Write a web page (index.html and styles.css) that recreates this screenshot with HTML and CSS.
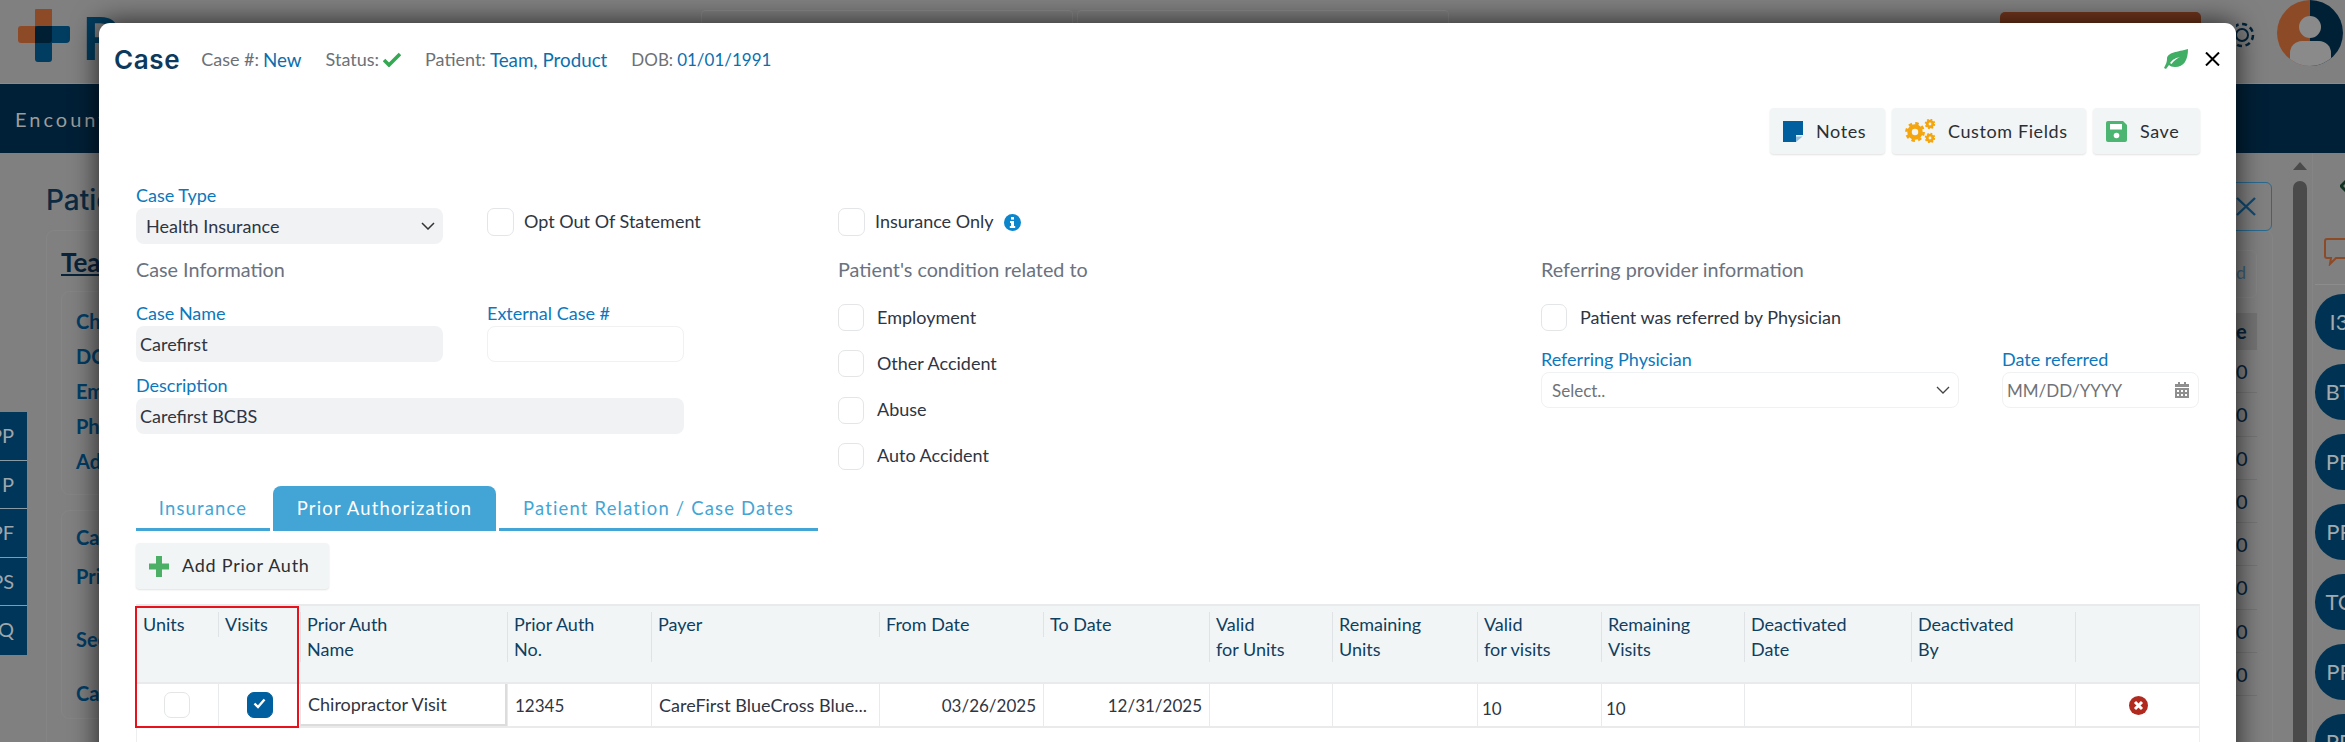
FILE: index.html
```html
<!DOCTYPE html>
<html lang="en">
<head>
<meta charset="utf-8">
<title>Case</title>
<link rel="stylesheet" href="styles.css">
</head>
<body>
<div class="page">
  <header class="topbar">
    <div class="brand">
      <svg class="logo" width="54" height="54" viewBox="0 0 54 54"><path d="M18 2a3 3 0 0 1 3-3h12a2 2 0 0 1 2 2v33H4a3 3 0 0 1-3-3V20a3 3 0 0 1 3-3h14z" fill="#8d4a27"/><path d="M18 17h33a2 2 0 0 1 2 2v11a4 4 0 0 1-4 4H35v16a3 3 0 0 1-3 3H21a3 3 0 0 1-3-3z" fill="#003d60"/><path d="M18 20a3 3 0 0 1 3-3h14v14a3 3 0 0 1-3 3H18z" fill="#001f33"/></svg>
      <span class="brand-name">R</span>
    </div>
    <div class="top-boxes"><span class="top-box"></span><span class="top-box"></span></div>
    <div class="top-end">
      <span class="top-btn"></span>
      <svg class="gear" width="22" height="32" viewBox="0 0 22 32"><circle cx="6" cy="16" r="6" fill="none" stroke="#00233a" stroke-width="2"/><circle cx="6" cy="16" r="11" fill="none" stroke="#00233a" stroke-width="2.5" stroke-dasharray="5 3.6"/></svg>
      <div class="avatar"><span class="avatar-head"></span><span class="avatar-body"></span></div>
    </div>
  </header>
  <nav class="navbar"><span class="nav-item">Encounters</span></nav>
  <div class="workspace">
    <main class="main">
      <h1 class="page-title">Patient</h1>
      <section class="panel">
        <div class="panel-left">
          <h2 class="patient-name">Team, Product</h2>
          <div class="info-card info-one">
            <p>Chart #</p><p>DOB</p><p>Email</p><p>Phone</p><p>Address</p>
          </div>
          <div class="info-card info-two">
            <p>Case</p><p>Primary</p><p class="far">Secondary</p><p class="mid">Case Type</p>
          </div>
        </div>
        <div class="panel-right">
          <button class="close-box" type="button"><svg width="20" height="19" viewBox="0 0 20 19"><path d="M1 1l18 17M19 1L1 18" stroke="#0f4a73" stroke-width="2.4" fill="none"/></svg></button>
          <div class="mini-card"><span class="mini-text">d</span></div>
          <div class="mini-head">e</div>
          <div class="mini-row">0</div><div class="mini-row">0</div><div class="mini-row">0</div><div class="mini-row">0</div><div class="mini-row">0</div><div class="mini-row">0</div><div class="mini-row">0</div><div class="mini-row">0</div>
        </div>
      </section>
    </main>
    <div class="scroll-track"><span class="scroll-arrow"></span><span class="scroll-thumb"></span></div>
    <aside class="rail">
      <svg class="rail-diamond" width="10" height="14" viewBox="0 0 10 14"><path d="M7 1L1 7l6 6" fill="none" stroke="#0f3320" stroke-width="3"/></svg>
      <svg class="rail-chat" width="30" height="28" viewBox="0 0 30 28"><path d="M3 1h27v19H12l-6 6 1-6H3a2 2 0 0 1-2-2V3a2 2 0 0 1 2-2z" fill="none" stroke="#8d4a27" stroke-width="2"/></svg>
      <div class="rail-people">
        <span class="bubble">I3</span><span class="bubble">BT</span><span class="bubble">PP</span><span class="bubble">PF</span><span class="bubble">TC</span><span class="bubble">PF</span><span class="bubble">PP</span>
      </div>
    </aside>
  </div>
  <div class="side-tabs">
    <span class="side-tab">PP</span><span class="side-tab">P</span><span class="side-tab">PF</span><span class="side-tab">PS</span><span class="side-tab">SQ</span>
  </div>

  <div class="modal">
    <div class="modal-head">
      <div class="head-left">
        <h2 class="modal-title">Case</h2>
        <span class="meta">Case #: <b class="meta-v">New</b></span>
        <span class="meta">Status: <svg class="status-check" width="18" height="15" viewBox="0 0 18 15"><path d="M1 8l5 5L17 2" fill="none" stroke="#35a853" stroke-width="3.6"/></svg></span>
        <span class="meta">Patient: <b class="meta-v">Team, Product</b></span>
        <span class="meta dob">DOB: <b class="meta-v">01/01/1991</b></span>
      </div>
      <div class="head-right">
        <svg width="24" height="20" viewBox="0 0 24 20"><path d="M24 0C24 11 20 18 11 18 8 18 6 17 5 16L2 20 0 19C2 15 3 13 3 10 3 3 14 3 24 0z" fill="#41ae66"/><path d="M6 14C9 10 12 9 16 8 12 10 9.500 12 7.500 15z" fill="#fff"/></svg>
        <svg width="15" height="14" viewBox="0 0 15 14"><path d="M1 .5l13 13M14 .5L1 13.500" stroke="#000" stroke-width="2" fill="none"/></svg>
      </div>
    </div>

    <div class="toolbar">
      <button class="tool-btn btn-notes" type="button">
        <svg width="20" height="21" viewBox="0 0 20 21"><path d="M0 0h20v14h-7v7H0z" fill="#00609f"/><path d="M13 15.500h6.500L13 21z" fill="#8fbfdc"/></svg>
        Notes
      </button>
      <button class="tool-btn btn-fields" type="button">
        <svg width="30" height="24" viewBox="0 0 30 24"><circle cx="10" cy="13" r="5.500" fill="none" stroke="#f5a50d" stroke-width="4.500"/><circle cx="10" cy="13" r="8.600" fill="none" stroke="#f5a50d" stroke-width="2.600" stroke-dasharray="3.500 3.250"/><circle cx="25" cy="5" r="2.800" fill="none" stroke="#f5a50d" stroke-width="2.800"/><circle cx="25" cy="5" r="4.500" fill="none" stroke="#f5a50d" stroke-width="1.600" stroke-dasharray="1.800 1.730"/><circle cx="25" cy="19" r="2.800" fill="none" stroke="#f5a50d" stroke-width="2.800"/><circle cx="25" cy="19" r="4.500" fill="none" stroke="#f5a50d" stroke-width="1.600" stroke-dasharray="1.800 1.730"/></svg>
        Custom Fields
      </button>
      <button class="tool-btn btn-save" type="button">
        <svg width="21" height="21" viewBox="0 0 21 21"><path d="M2 0h15l4 4v15a2 2 0 0 1-2 2H2a2 2 0 0 1-2-2V2a2 2 0 0 1 2-2z" fill="#4cb571"/><rect x="4" y="3" width="12" height="5.500" fill="#fff"/><circle cx="10.500" cy="14.500" r="2.800" fill="#fff"/></svg>
        Save
      </button>
    </div>

    <div class="form">
      <div class="col-left">
        <div class="split">
          <div class="field field-narrow">
            <label class="label">Case Type</label>
            <div class="control filled with-chevron">Health Insurance
              <svg class="chevron" width="14" height="8" viewBox="0 0 14 8"><path d="M1 1l6 6 6-6" fill="none" stroke="#333" stroke-width="1.500"/></svg>
            </div>
          </div>
          <div class="check-row opt-out"><span class="box box-wide"></span><span class="check-text">Opt Out Of Statement</span></div>
        </div>
        <h3 class="section-title">Case Information</h3>
        <div class="split split-fields">
          <div class="field field-narrow">
            <label class="label">Case Name</label>
            <div class="control filled plain">Carefirst</div>
          </div>
          <div class="field field-ext">
            <label class="label">External Case #</label>
            <div class="control outline"></div>
          </div>
        </div>
        <div class="field">
          <label class="label">Description</label>
          <div class="control filled plain">Carefirst BCBS</div>
        </div>
      </div>

      <div class="col-mid">
        <div class="check-row insurance"><span class="box box-wide"></span><span class="check-text">Insurance Only</span>
          <svg width="17" height="17" viewBox="0 0 17 17"><circle cx="8.500" cy="8.500" r="8.500" fill="#0b85cc"/><rect x="7" y="3" width="3" height="2.600" fill="#fff"/><path d="M6 7h4v5h1.200v2H5.800v-2H7V9H6z" fill="#fff"/></svg>
        </div>
        <h3 class="section-title">Patient's condition related to</h3>
        <div class="check-list">
          <div class="check-row"><span class="box"></span><span class="check-text">Employment</span></div>
          <div class="check-row"><span class="box"></span><span class="check-text">Other Accident</span></div>
          <div class="check-row"><span class="box"></span><span class="check-text">Abuse</span></div>
          <div class="check-row"><span class="box"></span><span class="check-text">Auto Accident</span></div>
        </div>
      </div>

      <div class="col-right">
        <h3 class="section-title first">Referring provider information</h3>
        <div class="check-row"><span class="box"></span><span class="check-text">Patient was referred by Physician</span></div>
        <div class="split split-ref">
          <div class="field field-phys">
            <label class="label">Referring Physician</label>
            <div class="control outline with-chevron muted">Select..
              <svg class="chevron" width="14" height="8" viewBox="0 0 14 8"><path d="M1 1l6 6 6-6" fill="none" stroke="#444" stroke-width="1.300"/></svg>
            </div>
          </div>
          <div class="field field-date">
            <label class="label">Date referred</label>
            <div class="control outline with-chevron date">MM/DD/YYYY
              <svg width="14" height="16" viewBox="0 0 14 16"><path d="M3 0h2v2h4V0h2v2h3v3H0V2h3zM0 6h14v10H0z" fill="#8f8f8f"/><path d="M2 8h2v2H2zM6 8h2v2H6zM10 8h2v2h-2zM2 12h2v2H2zM6 12h2v2H6zM10 12h2v2h-2z" fill="#fff"/></svg>
            </div>
          </div>
        </div>
      </div>
    </div>

    <div class="tabs">
      <span class="tab tab-ins">Insurance</span>
      <span class="tab tab-active">Prior Authorization</span>
      <span class="tab tab-rel">Patient Relation / Case Dates</span>
    </div>

    <div class="add-row">
      <button class="tool-btn add-btn" type="button">
        <svg width="20" height="21" viewBox="0 0 20 21"><path d="M7 0h6v7.500h7v6h-7V21H7v-7.500H0v-6h7z" fill="#4caf66"/></svg>
        <span class="add-text">Add Prior Auth</span>
      </button>
    </div>

    <div class="grid-wrap">
      <div class="grid-head">
        <div class="th"><span class="th-in">Units</span></div>
        <div class="th"><span class="th-in">Visits</span></div>
        <div class="th"><span class="th-in">Prior Auth<br>Name</span></div>
        <div class="th"><span class="th-in">Prior Auth<br>No.</span></div>
        <div class="th"><span class="th-in">Payer<br>&nbsp;</span></div>
        <div class="th"><span class="th-in">From Date</span></div>
        <div class="th"><span class="th-in">To Date</span></div>
        <div class="th"><span class="th-in">Valid<br>for Units</span></div>
        <div class="th"><span class="th-in">Remaining<br>Units</span></div>
        <div class="th"><span class="th-in">Valid<br>for visits</span></div>
        <div class="th"><span class="th-in">Remaining<br>Visits</span></div>
        <div class="th"><span class="th-in">Deactivated<br>Date</span></div>
        <div class="th"><span class="th-in">Deactivated<br>By</span></div>
        <div class="th"><span class="th-in">&nbsp;<br>&nbsp;</span></div>
      </div>
      <div class="grid-row">
        <div class="td center unit-cell"><span class="box small"></span></div>
        <div class="td center"><span class="box small checked"><svg width="13" height="11" viewBox="0 0 13 11"><path d="M1.500 5.500l3.500 3.500 6.500-7.500" fill="none" stroke="#fff" stroke-width="2.400"/></svg></span></div>
        <div class="td td-input">Chiropractor Visit</div>
        <div class="td num">12345</div>
        <div class="td">CareFirst BlueCross Blue...</div>
        <div class="td right num">03/26/2025</div>
        <div class="td right num">12/31/2025</div>
        <div class="td"></div>
        <div class="td"></div>
        <div class="td low num">10</div>
        <div class="td low num">10</div>
        <div class="td"></div>
        <div class="td"></div>
        <div class="td center"><svg width="19" height="19" viewBox="0 0 19 19"><circle cx="9.500" cy="9.500" r="9.500" fill="#b02a20"/><path d="M6 6l7 7M13 6l-7 7" stroke="#fff" stroke-width="3"/></svg></div>
      </div>
      <div class="annotation"></div>
    </div>
  </div>
</div>
</body>
</html>
```

FILE: styles.css
```css
* { box-sizing: border-box; }
html, body { margin: 0; padding: 0; height: 100%; }
body { font-family: Lato, "Noto Sans", sans-serif; font-size: 18px; color: #2f3542; background: #808080; overflow: hidden; }
p, h1, h2, h3 { margin: 0; }
button { font: inherit; border: 0; }

.page { position: relative; width: 2345px; height: 742px; overflow: hidden; background: #808080; }

/* dimmed page behind the dialog */
.topbar { height: 84px; display: flex; align-items: flex-start; padding-left: 17px; border-bottom: 1px solid #8b8b8b; }
.brand { display: flex; align-items: flex-start; gap: 11px; padding-top: 9px; }
.brand-name { font-size: 60px; line-height: 56px; font-weight: 700; color: #003d60; }
.top-boxes { display: flex; gap: 4px; margin-left: 580px; padding-top: 10px; }
.top-box { width: 372px; height: 50px; border: 1px solid #8a8a8a; border-radius: 4px; }
.top-end { margin-left: auto; display: flex; align-items: flex-start; }
.top-btn { width: 201px; height: 40px; margin-top: 12px; margin-right: 35px; border-radius: 5px; background: #73351c; }
.gear { margin-top: 19px; margin-right: 19px; }
.avatar { position: relative; width: 66px; height: 66px; margin-right: 2px; border-radius: 50%; background: linear-gradient(90deg, #8d4a27 50%, #002036 50%); overflow: hidden; }
.avatar-head { display: block; position: absolute; left: 22px; top: 16px; width: 22px; height: 22px; border-radius: 50%; background: #8a8a8a; }
.avatar-body { display: block; position: absolute; left: 13px; top: 41px; width: 41px; height: 30px; border-radius: 12px 12px 0 0; background: #8a8a8a; }
.navbar { height: 69px; background: #002037; display: flex; align-items: center; padding-left: 15px; }
.nav-item { font-size: 20px; letter-spacing: 3px; color: #9c9c9c; }

.workspace { display: flex; height: 589px; }
.main { flex: none; width: 2288px; padding: 0 15px 0 46px; }
.page-title { font-family: Inter, sans-serif; font-size: 28px; font-weight: 500; line-height: 34px; margin-top: 30px; color: #0c2a42; }
.panel { display: flex; justify-content: space-between; height: 560px; margin-top: 13px; padding: 16px 15px 0 14px; border: 1px solid #858585; border-radius: 8px; }
.patient-name { font-size: 26px; line-height: 30px; font-weight: 700; color: #08233a; text-decoration: underline; }
.info-card { width: 500px; margin-top: 14px; padding-left: 14px; border: 1px solid #858585; border-radius: 8px; color: #003d66; font-weight: 700; font-size: 20px; }
.info-one { height: 204px; padding-top: 12px; }
.info-one p { line-height: 35px; }
.info-two { height: 209px; margin-top: 15px; padding-top: 12px; }
.info-two p { line-height: 28px; margin-bottom: 11px; }
.info-two p.far { margin-top: 35px; }
.info-two p.mid { margin-top: 26px; }

.panel-right { width: 122px; display: flex; flex-direction: column; align-items: flex-end; margin-right: -15px; position: relative; }
.close-box { position: absolute; right: 0; top: -65px; width: 60px; height: 49px; border: 1px solid #2a6a90; border-radius: 6px; background: transparent; display: flex; align-items: center; justify-content: flex-end; padding-right: 15px; }
.mini-card { width: 100%; height: 48px; margin-top: 3px; margin-right: 15px; border: 1px solid #858585; border-radius: 6px; text-align: right; color: #3d5f78; padding: 10px 10px 0 0; }
.mini-head { width: 100%; height: 37px; margin-top: 15px; margin-right: 15px; background: #747474; font-weight: 700; font-size: 20px; color: #08233a; line-height: 37px; padding-left: 101px; }
.mini-row { width: 100%; height: 43.300px; margin-right: 15px; border-bottom: 1px solid #757575; font-size: 20px; color: #08233a; padding-left: 101px; line-height: 42px; }

.scroll-track { flex: none; width: 24px; padding-top: 9px; display: flex; flex-direction: column; align-items: center; }
.scroll-arrow { width: 0; height: 0; border-left: 7px solid transparent; border-right: 7px solid transparent; border-bottom: 8px solid #4a4a4a; }
.scroll-thumb { width: 14px; flex: 1; margin-top: 11px; border-radius: 7px 7px 0 0; background: #4a4a4a; }
.rail { flex: none; width: 60px; border-left: 1px solid #858585; position: relative; }
.rail-diamond { display: block; margin: 26px 0 0 27px; }
.rail-chat { display: block; margin: 45px 0 0 11px; }
.rail-people { margin-top: 18px; padding-top: 9px; border-top: 1px solid #8c8c8c; display: flex; flex-direction: column; gap: 14.500px; margin-left: 2px; }
.bubble { flex: none; width: 56px; height: 55.500px; padding-right: 8px; border-radius: 50%; background: #003353; color: #a2a9ad; font-size: 22px; display: flex; align-items: center; justify-content: center; }
.side-tabs { position: absolute; left: 0; top: 412px; width: 27px; display: flex; flex-direction: column; background: #00365a; }
.side-tab { height: 48.500px; border-bottom: 1px solid #8a9aa5; color: #9ea6ab; font-size: 20px; line-height: 47px; text-align: right; overflow: hidden; white-space: nowrap; padding-right: 13px; direction: rtl; }
.side-tab:last-child { border-bottom: 0; }

/* dialog */
.modal { position: absolute; left: 99px; top: 23px; width: 2137px; height: 760px; background: #fff; border-radius: 11px; box-shadow: 0 0 28px rgba(0, 0, 0, .75); display: flex; flex-direction: column; }
.modal-head { display: flex; justify-content: space-between; align-items: center; height: 32px; margin-top: 20px; padding: 0 16px 0 15px; }
.head-left { display: flex; align-items: center; gap: 24px; }
.modal-title { font-family: Inter, sans-serif; font-size: 26px; font-weight: 600; letter-spacing: .6px; color: #0d3a5c; margin-right: -3px; }
.meta { font-size: 18px; color: #6b7177; display: flex; align-items: center; gap: 4px; }
.meta-v { font-weight: 400; font-size: 18.800px; color: #0b6fae; }
.dob { font-size: 17px; }
.dob .meta-v { font-size: 17px; }
.status-check { margin-top: 1px; }
.head-right { display: flex; align-items: center; gap: 17px; }
.toolbar { display: flex; justify-content: flex-end; gap: 7px; margin-top: 33px; padding-right: 36px; }
.tool-btn { display: flex; align-items: center; gap: 13px; height: 46px; padding: 0 0 0 13px; background: #f2f5f6; border-radius: 4px; box-shadow: 0 1px 2px rgba(0, 0, 0, .12); color: #2b2f33; letter-spacing: .6px; }
.btn-notes { width: 115px; }
.btn-fields { width: 194px; }
.btn-save { width: 107px; }

.form { display: flex; margin-top: 31px; padding-left: 37px; height: 285px; }
.col-left { width: 548px; margin-right: 154px; }
.col-mid { width: 703px; }
.col-right { width: 659px; }
.label { display: block; height: 23px; line-height: 21px; color: #0b78bd; font-size: 18px; }
.control { height: 36px; border-radius: 8px; display: flex; align-items: center; font-size: 18px; color: #2f3542; }
.filled { background: #f1f2f4; padding-left: 10px; }
.plain { padding-left: 4px; }
.outline { border: 1px solid #f0f1f2; padding-left: 10px; }
.with-chevron { justify-content: space-between; padding-right: 8px; }
.muted { color: #6f7378; font-size: 17px; }
.date { color: #6f7378; padding-left: 4px; padding-right: 9px; font-size: 17px; }
.split { display: flex; gap: 44px; align-items: flex-start; }
.field-narrow { flex: none; width: 307px; }
.field-ext { flex: none; width: 197px; }
.field-phys { flex: none; width: 418px; }
.field-date { flex: none; width: 197px; }
.split-ref { gap: 43px; margin-top: 18px; }
.split-fields { margin-top: 23px; margin-bottom: 13px; }
.section-title { font-size: 19.800px; font-weight: 400; line-height: 22px; margin-top: 14px; color: #6b7280; }
.section-title.first { margin-top: 73px; margin-bottom: 24px; }
.col-mid .section-title { margin-bottom: 24px; margin-top: 22px; }
.check-row { display: flex; align-items: center; gap: 13px; height: 27px; white-space: nowrap; }
.opt-out { margin-top: 23px; gap: 10px; height: 28px; }
.insurance { margin-top: 23px; gap: 10px; height: 28px; }
.box { flex: none; display: block; width: 26px; height: 27px; border: 1px solid #e3e5e7; border-radius: 7px; background: #fff; }
.box-wide { width: 27px; height: 28px; }
.check-text { color: #2f3542; font-size: 18px; line-height: 22px; margin-top: -2px; }
.check-list { display: flex; flex-direction: column; gap: 19.300px; }

.tabs { display: flex; gap: 3px; padding-left: 37px; height: 45px; margin-top: 16px; }
.tab { display: flex; align-items: center; justify-content: center; padding-top: 2px; border-bottom: 3px solid #42a5d6; color: #42a5d6; font-size: 18.400px; letter-spacing: 1.200px; }
.tab-ins { width: 134px; }
.tab-active { width: 223px; background: #42a5d6; color: #fff; border-radius: 8px 8px 0 0; }
.tab-rel { width: 319px; }

.add-row { padding: 12px 0 0 37px; }
.add-btn { width: 193px; letter-spacing: .75px; }
.add-text { margin-top: -3px; }

.grid-wrap { position: relative; margin: 15px 36px 0 37px; flex: 1; border-top: 2px solid #e8eaeb; border-left: 1px solid #eceeef; border-right: 1px solid #eceeef; }
.grid-head, .grid-row { display: grid; grid-template-columns: 81px 82px 207px 144px 228px 164px 166px 123px 145px 124px 143px 167px 164px 125px; }
.grid-head { height: 78px; background: #f2f5f6; border-bottom: 2px solid #e8eaeb; }
.th { padding-top: 6px; color: #0f3f5f; font-size: 18px; line-height: 25px; }
.th-in { display: block; padding-left: 6px; border-left: 1px solid #dfe3e5; }
.th:first-child .th-in { border-left: 0; padding-left: 6px; }
.grid-row { height: 44px; border-bottom: 2px solid #e8eaeb; }
.td { display: flex; align-items: center; padding: 0 7px; border-left: 1px solid #e8eaeb; font-size: 18px; color: #2f3542; white-space: nowrap; overflow: hidden; }
.td:first-child { border-left: 0; }
.unit-cell { padding-right: 9px; }
.num { font-size: 17px; }
.center { justify-content: center; }
.right { justify-content: flex-end; }
.low { padding-top: 6px; padding-left: 4px; }
.td-input { border-right: 2px solid #dcdcdc; border-bottom: 2px solid #dcdcdc; }
.small { width: 26px; height: 26px; }
.checked { background: #00609f; border-color: #00609f; display: flex; align-items: center; justify-content: center; padding-bottom: 3px; }
.annotation { position: absolute; left: -2px; top: 0; width: 164px; height: 122px; border: 2px solid #e8121c; }
```
